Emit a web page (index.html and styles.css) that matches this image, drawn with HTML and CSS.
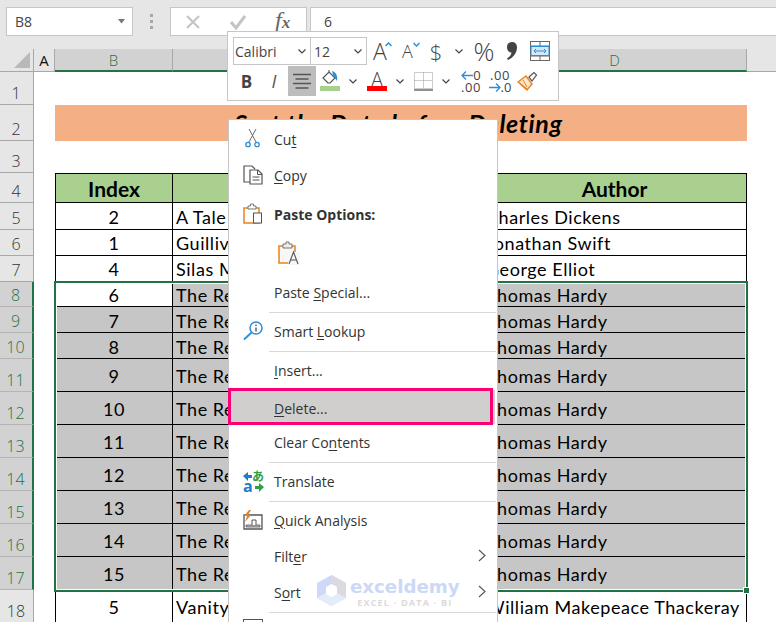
FILE: index.html
```html
<!DOCTYPE html>
<html lang="en">
<head>
<meta charset="utf-8">
<title>Excel context menu</title>
<link rel="stylesheet" href="styles.css">
</head>
<body>
<div class="app">
  <div class="fbar">
    <div class="namebox"><span>B8</span><svg width="8" height="5" viewBox="0 0 8 5"><path d="M0 0h7L3.500 4.500z" fill="#777"/></svg></div>
    <div class="dots"><i></i><i></i><i></i></div>
    <div class="fbtns">
      <svg width="16" height="16" viewBox="0 0 16 16"><path d="M2 2l12 12M14 2L2 14" stroke="#c4c4c4" stroke-width="2"/></svg>
      <svg width="18" height="16" viewBox="0 0 18 16"><path d="M2 8l5 6L16 2" stroke="#c4c4c4" stroke-width="3" fill="none"/></svg>
      <span class="fx">f<span class="fx-x">x</span></span>
    </div>
    <div class="formula">6</div>
  </div>

  <div class="sheet">
    <div class="row colhead">
      <div class="corner"><svg width="16" height="16" viewBox="0 0 16 16"><path d="M16 0v16H0z" fill="#b9b9b9"/></svg></div>
      <div class="ch">A</div>
      <div class="ch sel">B</div>
      <div class="ch sel">C</div>
      <div class="ch sel">D</div>
      <div class="ch rest"></div>
    </div>

    <div class="row h33"><div class="rh">1</div></div>
    <div class="row h36"><div class="rh">2</div><div class="spacer"></div><div class="title">Sort the Data before Deleting</div></div>
    <div class="row h32"><div class="rh">3</div></div>
    <div class="row h30 first"><div class="rh">4</div><div class="spacer"></div><div class="c th">Index</div><div class="c th">Book</div><div class="c th">Author</div></div>
    <div class="row h27 low"><div class="rh">5</div><div class="spacer"></div><div class="c n">2</div><div class="c">A Tale of Two Cities</div><div class="c">Charles Dickens</div></div>
    <div class="row h26"><div class="rh">6</div><div class="spacer"></div><div class="c n">1</div><div class="c">Guilliver's Travels</div><div class="c">Jonathan Swift</div></div>
    <div class="row h26"><div class="rh">7</div><div class="spacer"></div><div class="c n">4</div><div class="c">Silas Marner</div><div class="c">George Elliot</div></div>
    <div class="row h25 on low"><div class="rh">8</div><div class="spacer"></div><div class="c n active">6</div><div class="c">The Return of the Native</div><div class="c">Thomas Hardy</div></div>
    <div class="row h26 on low"><div class="rh">9</div><div class="spacer"></div><div class="c n">7</div><div class="c">The Return of the Native</div><div class="c">Thomas Hardy</div></div>
    <div class="row h26 on low"><div class="rh">10</div><div class="spacer"></div><div class="c n">8</div><div class="c">The Return of the Native</div><div class="c">Thomas Hardy</div></div>
    <div class="row h33 on low"><div class="rh">11</div><div class="spacer"></div><div class="c n">9</div><div class="c">The Return of the Native</div><div class="c">Thomas Hardy</div></div>
    <div class="row h33 on low"><div class="rh">12</div><div class="spacer"></div><div class="c n">10</div><div class="c">The Return of the Native</div><div class="c">Thomas Hardy</div></div>
    <div class="row h33 on low"><div class="rh">13</div><div class="spacer"></div><div class="c n">11</div><div class="c">The Return of the Native</div><div class="c">Thomas Hardy</div></div>
    <div class="row h33 on low"><div class="rh">14</div><div class="spacer"></div><div class="c n">12</div><div class="c">The Return of the Native</div><div class="c">Thomas Hardy</div></div>
    <div class="row h33 on low"><div class="rh">15</div><div class="spacer"></div><div class="c n">13</div><div class="c">The Return of the Native</div><div class="c">Thomas Hardy</div></div>
    <div class="row h33 on low"><div class="rh">16</div><div class="spacer"></div><div class="c n">14</div><div class="c">The Return of the Native</div><div class="c">Thomas Hardy</div></div>
    <div class="row h33 on low"><div class="rh">17</div><div class="spacer"></div><div class="c n">15</div><div class="c">The Return of the Native</div><div class="c">Thomas Hardy</div></div>
    <div class="row h33 low"><div class="rh">18</div><div class="spacer"></div><div class="c n">5</div><div class="c">Vanity Fair</div><div class="c">William Makepeace Thackeray</div></div>

    <div class="selection"><span class="handle"></span></div>
  </div>

  <div class="mini">
    <div class="mrow">
      <div class="combo w77"><span>Calibri</span><svg class="chev" width="8" height="5" viewBox="0 0 8 5"><path d="M.5.500L4 4 7.500.500" stroke="#444" stroke-width="1.200" fill="none"/></svg></div>
      <div class="combo w56"><span>12</span><svg class="chev" width="8" height="5" viewBox="0 0 8 5"><path d="M.5.500L4 4 7.500.500" stroke="#444" stroke-width="1.200" fill="none"/></svg></div>
      <div class="mi w26"><span class="ga big">A</span><svg class="sup sup1" width="7" height="5" viewBox="0 0 7 5"><path d="M.5 4L3.500 1 6.500 4" stroke="#2b8fd6" stroke-width="1.500" fill="none"/></svg></div>
      <div class="mi w29"><span class="ga mid">A</span><svg class="sup sup2" width="7" height="5" viewBox="0 0 7 5"><path d="M.5 1L3.500 4 6.500 1" stroke="#2b8fd6" stroke-width="1.500" fill="none"/></svg></div>
      <div class="mi w28"><span class="ga dollar">$</span></div>
      <div class="mi w18"><svg width="8" height="5" viewBox="0 0 8 5"><path d="M.5.500L4 4 7.500.500" stroke="#444" stroke-width="1.200" fill="none"/></svg></div>
      <div class="mi w32"><span class="ga pct">%</span></div>
      <div class="mi w24"><svg width="10" height="18" viewBox="0 0 10 18"><path d="M5 0C8 0 10 2.200 10 5.500 10 11 6 16 1 18L0 16.500C2.500 15 4.200 13 4.500 10.500 2 10.500 0 8.500 0 5.300 0 2.200 2 0 5 0z" fill="#444"/></svg></div>
      <div class="mi w32">
        <svg width="20" height="20" viewBox="0 0 20 20"><rect x=".5" y=".5" width="19" height="19" fill="#fff" stroke="#666"/><path d="M0 5h20M0 15h20M10 0v5M10 15v5" stroke="#666"/><rect x="1" y="5.500" width="18" height="9" fill="#d4e9f8" stroke="#2b8fd6"/><path d="M4 10h12M6 8l-2 2 2 2M14 8l2 2-2 2" stroke="#2b8fd6" fill="none"/></svg>
      </div>
    </div>
    <div class="mrow r2">
      <div class="mi w27"><b class="bold">B</b></div>
      <div class="mi w28"><i class="ital">I</i></div>
      <div class="mi w28 pressed"><svg width="18" height="16" viewBox="0 0 18 16"><path d="M0 1.500h18M2.500 6h13M0 10.500h18M2.500 15h13" stroke="#555" stroke-width="1.300"/></svg></div>
      <div class="mi w28 bar-wrap">
        <svg width="20" height="16" viewBox="0 0 20 16"><path d="M3 8l6-6 6 6-5 5H8z" fill="#fff" stroke="#555" stroke-width="1.200"/><path d="M9 2V0" stroke="#555"/><path d="M12 1c4 1 6 5 5 10-2-2-3-5-4-6z" fill="#2b8fd6"/></svg>
        <span class="bar green"></span>
      </div>
      <div class="mi w18"><svg width="8" height="5" viewBox="0 0 8 5"><path d="M.5.500L4 4 7.500.500" stroke="#444" stroke-width="1.200" fill="none"/></svg></div>
      <div class="mi w30 bar-wrap"><span class="ga under">A</span><span class="bar red"></span></div>
      <div class="mi w15"><svg width="8" height="5" viewBox="0 0 8 5"><path d="M.5.500L4 4 7.500.500" stroke="#444" stroke-width="1.200" fill="none"/></svg></div>
      <div class="mi w32"><svg width="19" height="19" viewBox="0 0 19 19"><path d="M.5 .5h18v16H.5z M9.500 .5v16M.5 8.500h18" fill="none" stroke="#999" stroke-dasharray="1 1"/><path d="M0 18h19" stroke="#555" stroke-width="1.300"/></svg></div>
      <div class="mi w14"><svg width="8" height="5" viewBox="0 0 8 5"><path d="M.5.500L4 4 7.500.500" stroke="#444" stroke-width="1.200" fill="none"/></svg></div>
      <div class="mi w36 dec"><span class="d1"><svg width="12" height="9" viewBox="0 0 12 9"><path d="M12 4.500H1M5 .5l-4 4 4 4" stroke="#2b8fd6" stroke-width="1.300" fill="none"/></svg><span>0</span></span><span class="d2">.00</span></div>
      <div class="mi w22 dec"><span class="d2">.00</span><span class="d1"><svg width="12" height="9" viewBox="0 0 12 9"><path d="M0 4.500h11M7 .5l4 4-4 4" stroke="#2b8fd6" stroke-width="1.300" fill="none"/></svg><span>.0</span></span></div>
      <div class="mi w33"><svg width="21" height="20" viewBox="0 0 21 20"><path d="M1 11l8-6 6 8-5 6z" fill="#fbe6d0" stroke="#e8831f" stroke-width="1.400"/><path d="M3 12l7 6M6 9l4 7" stroke="#e8831f"/><path d="M12 6l5-4.500 2.500 2.500-4.500 6z" fill="#fff" stroke="#555" stroke-width="1.200"/></svg></div>
    </div>
  </div>

  <div class="menu">
    <div class="item">
      <svg class="ico" width="20" height="20" viewBox="0 0 20 20"><path d="M6 13L13 0M13 13L6 0" stroke="#666" stroke-width="1"/><circle cx="5" cy="15.500" r="2.200" fill="#fff" stroke="#2b8fd6" stroke-width="1.300"/><circle cx="14" cy="15.500" r="2.200" fill="#fff" stroke="#2b8fd6" stroke-width="1.300"/></svg>
      <span>Cu<u>t</u></span>
    </div>
    <div class="item">
      <svg class="ico" width="20" height="20" viewBox="0 0 20 20"><path d="M7 17H1V1h8l3 3" fill="#fff" stroke="#555" stroke-width="1.200"/><path d="M7 5h8l4 4v10H7z" fill="#fff" stroke="#555" stroke-width="1.200"/><path d="M14.500 5v4.500H19M9.500 12h7M9.500 15h7" fill="none" stroke="#555"/></svg>
      <span><u>C</u>opy</span>
    </div>
    <div class="item gap-top head">
      <svg class="ico" width="20" height="22" viewBox="0 0 20 22"><path d="M1 5h15v15H1z" fill="#fff" stroke="#e8831f" stroke-width="1.500"/><path d="M5 6V3h2.500V1h3v2H13v3z" fill="#fff" stroke="#777"/><rect x="10.500" y="10" width="8" height="10" fill="#fff" stroke="#555"/></svg>
      <span>Paste Options:</span>
    </div>
    <div class="item gap-top pasteico">
      <svg width="22" height="24" viewBox="0 0 22 24"><path d="M1 5h16v17H1z" fill="#f7f7f7" stroke="#e8831f" stroke-width="1.500"/><path d="M5 7V3h3V1h3v2h3v4z" fill="#eee" stroke="#777"/><rect x="10" y="11" width="12" height="13" fill="#f7f7f7"/><path d="M11 23l4.500-12L20 23M12.500 19h6" stroke="#555" stroke-width="1.100" fill="none"/></svg>
    </div>
    <div class="item gap-top"><span class="noicon">Paste <u>S</u>pecial...</span></div>
    <div class="sep"></div>
    <div class="item">
      <svg class="ico" width="20" height="20" viewBox="0 0 20 20"><circle cx="13" cy="7" r="6" fill="#fff" stroke="#2b8fd6" stroke-width="1.500"/><path d="M8.500 11.500L1 18.500" stroke="#2b8fd6" stroke-width="1.800"/><path d="M13 6.500v4M13 3.500v1.500" stroke="#555" stroke-width="1.400"/></svg>
      <span>Smart <u>L</u>ookup</span>
    </div>
    <div class="sep"></div>
    <div class="item"><span class="noicon"><u>I</u>nsert...</span></div>
    <div class="item del"><span class="noicon"><u>D</u>elete...</span><span class="marker"></span></div>
    <div class="item"><span class="noicon">Clear Co<u>n</u>tents</span></div>
    <div class="sep"></div>
    <div class="item">
      <span class="ico trans"><svg width="21" height="21" viewBox="0 0 21 21"><path d="M0 5l5-4v3h4v3H5v3z" fill="#1e7ec8"/><path d="M21 16l-5-4v3h-4v3h4v3z" fill="#2f9e44"/></svg><b class="ta">a</b><b class="tj">あ</b></span>
      <span>Translate</span>
    </div>
    <div class="sep"></div>
    <div class="item">
      <svg class="ico" width="20" height="20" viewBox="0 0 20 20"><path d="M1 5h18v14H1z" fill="#fff" stroke="#555" stroke-width="1.300"/><path d="M3 15h14v2H3z" fill="#bbb" stroke="#555" stroke-width=".8"/><path d="M9 15v-5h4v5" fill="#fff" stroke="#555"/><path d="M6 0L1 6h3l-2 6 6-7H5l3-5z" fill="#e8831f"/></svg>
      <span><u>Q</u>uick Analysis</span>
    </div>
    <div class="item">
      <span class="noicon">Filt<u>e</u>r</span>
      <svg class="arrow" width="8" height="13" viewBox="0 0 8 13"><path d="M1 1l6 5.500-6 5.500" stroke="#555" stroke-width="1.100" fill="none"/></svg>
    </div>
    <div class="item">
      <span class="noicon">S<u>o</u>rt</span>
      <svg class="arrow" width="8" height="13" viewBox="0 0 8 13"><path d="M1 1l6 5.500-6 5.500" stroke="#555" stroke-width="1.100" fill="none"/></svg>
    </div>
    <div class="sep"></div>
    <div class="item">
      <svg class="ico topico" width="20" height="20" viewBox="0 0 20 20"><rect x=".5" y=".5" width="19" height="16" fill="#fff" stroke="#555"/></svg>
    </div>

    <div class="mark">
      <svg width="29" height="31" viewBox="0 0 29 31"><path d="M14.500 0L29 8v15l-14.500 8L0 23V8z" fill="#cbd8f6"/><path d="M14.500 0L29 8v15l-14.500-8z" fill="#d9d9de"/><path d="M0 23l14.500-8L29 23l-14.500 8z" fill="#e4ebf9"/><path d="M9 12l5.500-3 5.500 3v7l-5.500 3L9 19z" fill="#fff"/></svg>
      <div class="marktext"><div class="brand">exceldemy</div><div class="tag">EXCEL · DATA · BI</div></div>
    </div>
  </div>
</div>
</body>
</html>
```

FILE: styles.css
```css
* { box-sizing: border-box; }
html, body { margin: 0; padding: 0; overflow: hidden; }
body { width: 776px; height: 622px; background: #fff; }
.app { position: relative; width: 776px; height: 622px; overflow: hidden; font-family: "Lato", "Liberation Sans", sans-serif; }

/* formula bar */
.fbar { display: flex; align-items: stretch; height: 49px; padding: 7px 0 13px 6px; background: #e6e6e6; }
.namebox { width: 127px; display: flex; align-items: center; justify-content: space-between; padding: 0 6px 0 8px; background: #fff; border: 1px solid #c6c6c6; font: 14px "Open Sans", sans-serif; color: #444; }
.dots { width: 37px; display: flex; flex-direction: column; align-items: center; justify-content: center; gap: 3px; }
.dots i { width: 3px; height: 3px; background: #a8a8a8; }
.fbtns { width: 137px; display: flex; align-items: center; gap: 28px; padding-left: 14px; background: #fff; border: 1px solid #c6c6c6; }
.fx { font: italic 24px/28px "Liberation Serif", serif; color: #666; }
.fx-x { font-size: 17px; font-weight: 700; }
.formula { flex: 1; margin-left: 3px; padding-left: 13px; background: #fff; border: 1px solid #c6c6c6; border-right: 0; font: 14px/27px "Open Sans", sans-serif; color: #444; }

/* sheet */
.sheet { position: relative; }
.row { display: grid; grid-template-columns: 34px 21px 118px 310px 264px 29px; }
.colhead { height: 23px; background: #e6e6e6; }
.h25 { height: 25px; } .h26 { height: 26px; } .h27 { height: 27px; } .h30 { height: 30px; } .h32 { height: 32px; } .h33 { height: 33px; } .h36 { height: 36px; }
.corner { display: flex; align-items: flex-end; justify-content: flex-end; padding: 0 3px 3px 0; border-right: 1px solid #a8a8a8; border-bottom: 1px solid #a8a8a8; }
.ch { display: flex; align-items: center; justify-content: center; font: 400 15px "Open Sans", sans-serif; color: #111; border-right: 1px solid #a8a8a8; border-bottom: 1px solid #a8a8a8; }
.ch.sel { font-weight: 300; background: #d2d2d2; color: #217346; border-bottom: 2px solid #217346; }
.ch.rest { border-right: 0; }

.rh { display: flex; align-items: flex-end; justify-content: center; padding: 0 1px 1px 0; background: #e6e6e6; border-right: 1px solid #a8a8a8; border-bottom: 1px solid #a8a8a8; font: 300 16px/20px "Open Sans", sans-serif; color: #333; }
.on .rh { background: #d2d2d2; color: #217346; border-right: 2px solid #217346; border-bottom-color: #b4b4b4; }
.spacer { width: 21px; }
.title { grid-column: span 3; display: flex; align-items: center; justify-content: center; padding-right: 5px; background: #f4b084; font-size: 25px; font-weight: 700; font-style: italic; color: #000; letter-spacing: .65px; }

.c { display: flex; align-items: center; padding: 0 3px; font-size: 18px; letter-spacing: .56px; color: #000; white-space: nowrap; overflow: hidden; border-right: 1px solid #000; border-bottom: 1px solid #000; }
.low .c { padding-top: 2px; }
.c.n { justify-content: center; border-left: 1px solid #000; }
.th { justify-content: center; font-size: 21px; font-weight: 700; letter-spacing: 0; background: #a9d08e; }
.th:nth-child(3) { border-left: 1px solid #000; }
.first .c { border-top: 1px solid #000; }
.on .c { background: #c6c6c6; }
.on .c.active { background: #fff; }

.selection { position: absolute; left: 54px; top: 232px; width: 694px; height: 311px; border: 2px solid #217346; box-shadow: inset 0 0 0 1px #fff; pointer-events: none; }
.handle { position: absolute; right: -4px; bottom: -4px; width: 5px; height: 5px; background: #217346; border: 1px solid #fff; box-sizing: content-box; }

/* mini toolbar */
.mini { position: absolute; left: 227px; top: 31px; width: 332px; height: 70px; padding: 5px 5px 0; background: #fff; border: 1px solid #c6c6c6; }
.mrow { display: flex; align-items: center; height: 28px; }
.r2 { margin-top: 1px; height: 30px; }
.combo { position: relative; flex: none; height: 28px; display: flex; align-items: center; justify-content: space-between; padding: 0 4px 0 1px; border: 1px solid #c6c6c6; font: 14px "Open Sans", sans-serif; color: #444; }
.combo + .combo { margin-left: 0; padding-left: 3px; border-left: 0; }
.w77 { width: 78px; } .w56 { width: 56px; }
.mi { position: relative; flex: none; height: 100%; display: flex; align-items: center; justify-content: center; color: #444; }
.w14 { width: 14px; } .w15 { width: 15px; } .w18 { width: 18px; } .w22 { width: 22px; } .w24 { width: 24px; } .w26 { width: 26px; } .w27 { width: 27px; } .w28 { width: 28px; } .w29 { width: 29px; } .w30 { width: 30px; } .w32 { width: 32px; } .w33 { width: 33px; } .w36 { width: 36px; }
.ga { font-family: "Open Sans", sans-serif; color: #444; line-height: 1; }
.big { font-size: 23px; font-weight: 300; }
.mid { font-size: 18px; font-weight: 300; }
.sup { position: absolute; top: 5px; }
.sup1 { right: 1px; }
.sup2 { right: 2px; }
.dollar { font-size: 22px; font-weight: 300; }
.pct { font-size: 26px; font-weight: 300; }
.bold { font: bold 17px "Open Sans", sans-serif; color: #444; }
.ital { font: italic 18px "Open Sans", sans-serif; color: #555; }
.pressed { background: #bdbdbd; }
.bar-wrap { flex-direction: column; justify-content: flex-start; padding-top: 4px; }
.under { font-size: 20px; font-weight: 300; height: 17px; }
.bar { position: absolute; left: 4px; bottom: 5px; width: 20px; height: 5px; }
.green { background: #a9d08e; }
.red { background: #f00; left: 5px; }
.dec { flex-direction: column; font: 13px/12px "Open Sans", sans-serif; color: #444; }
.dec .d1 { display: flex; align-items: center; }
.dec .d2 { letter-spacing: .5px; }

/* context menu */
.menu { position: absolute; left: 228px; top: 119px; width: 270px; height: 510px; padding-top: 1px; background: #fff; border: 1px solid #c6c6c6; font: 14px "Open Sans", sans-serif; color: #333; }
.item { position: relative; flex: none; height: 36px; display: flex; align-items: center; padding-left: 14px; }
.ico { flex: none; margin-right: 11px; }
.noicon { margin-left: 31px; }
u { text-underline-offset: 2px; text-decoration-thickness: 1px; }
.gap-top { margin-top: 3px; }
.head { font-weight: 700; font-size: 14px; }
.pasteico { padding-left: 49px; }
.sep { height: 3px; margin: 0 1px 0 40px; background: linear-gradient(#fff 2px, #d8d8d8 2px); }
.del { margin-top: 2px; height: 34px; padding-top: 2px; margin-right: 2px; background: #d0cfcd; }
.marker { position: absolute; left: -1px; top: -2px; width: 265px; height: 37px; border: 3px solid #fb0076; }
.arrow { position: absolute; right: 11px; top: 11px; }
.topico { align-self: flex-start; margin-top: 6px; }
.trans { position: relative; display: block; width: 20px; height: 21px; }
.trans svg { position: absolute; left: 0; top: 0; }
.ta { position: absolute; left: 0; bottom: -2px; font: bold 16px/15px "Open Sans", sans-serif; color: #1e7ec8; }
.tj { position: absolute; right: -1px; top: -2px; font: bold 12px/14px "Noto Sans CJK JP", sans-serif; color: #2f9e44; }

/* watermark */
.mark { position: absolute; left: 88px; top: 455px; display: flex; gap: 4px; align-items: flex-start; opacity: .95; }
.marktext { line-height: 1; }
.brand { font: bold 18.200px/22px "DejaVu Sans", sans-serif; color: #c9d7f7; margin-top: 1px; }
.tag { font: bold 9px/10px "Open Sans", sans-serif; color: #d9d9d9; letter-spacing: 1.200px; text-align: center; }
```
